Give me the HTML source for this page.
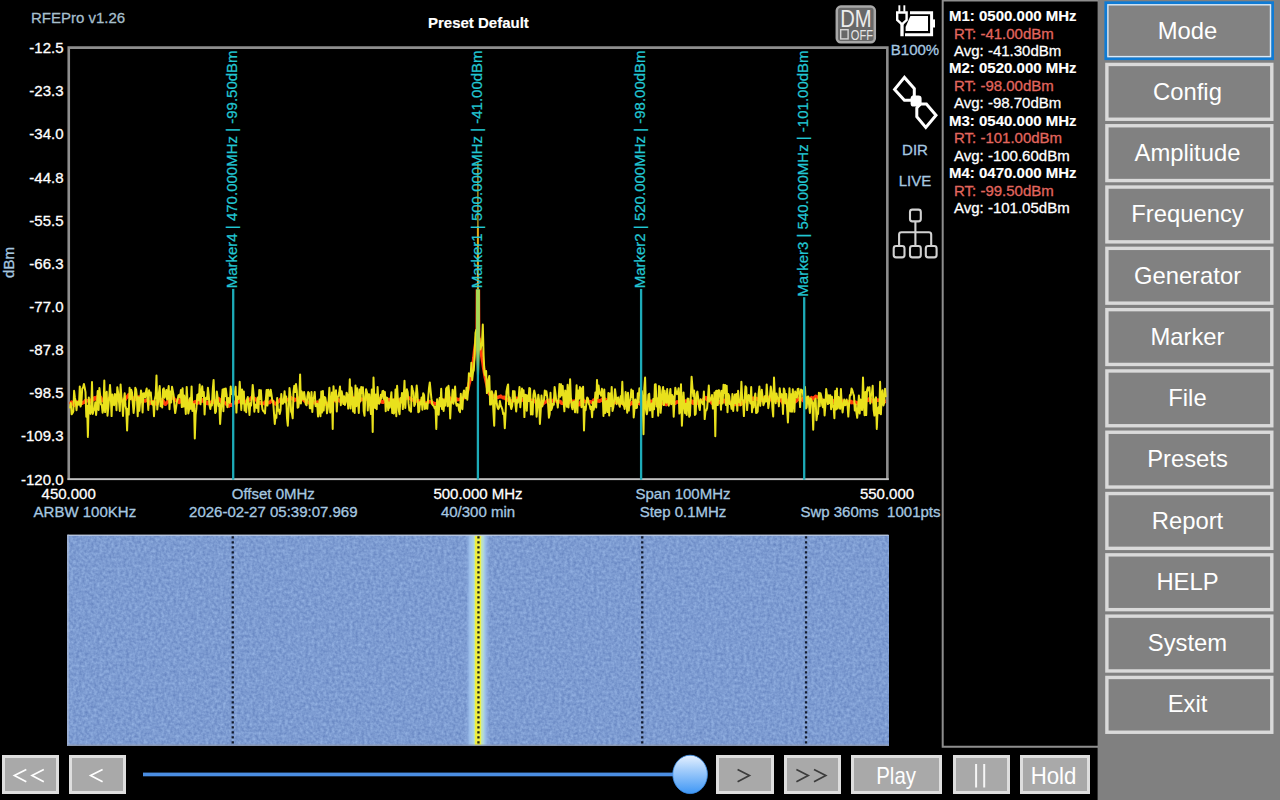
<!DOCTYPE html>
<html>
<head>
<meta charset="utf-8">
<title>RFEPro</title>
<style>
html,body{margin:0;padding:0;background:#000;}
body{width:1280px;height:800px;position:relative;overflow:hidden;font-family:"Liberation Sans",sans-serif;}
.t{position:absolute;font-size:15px;line-height:17px;white-space:nowrap;color:#a6c8e0;-webkit-text-stroke:0.3px;}
.t.b{-webkit-text-stroke:0.15px;}
.w{color:#fff;}
.b{font-weight:bold;}
.c{text-align:center;}
svg{position:absolute;left:0;top:0;}
svg text{font-family:"Liberation Sans",sans-serif;}
#side{position:absolute;left:1097.5px;top:0;width:182.5px;height:800px;}
.mt{position:absolute;left:5.4px;width:169.2px;height:50px;color:#fff;font-size:23.8px;text-align:center;line-height:50px;white-space:nowrap;}
.bb{position:absolute;top:755.2px;height:32.6px;border:3px solid #dedede;background:#a9a9a9;color:#fff;font-size:22px;text-align:center;line-height:32px;}
</style>
</head>
<body>

<!-- main chart -->
<svg width="1280" height="800" viewBox="0 0 1280 800">
  <defs>
    <filter id="nz" x="0" y="0" width="100%" height="100%" color-interpolation-filters="sRGB">
      <feTurbulence type="fractalNoise" baseFrequency="0.34" numOctaves="2" seed="3" result="n"/>
      <feColorMatrix in="n" type="matrix" values="0.23 0 0 0 0.375  0.23 0 0 0 0.495  0.17 0 0 0 0.737  0 0 0 0 1"/>
    </filter>
    <linearGradient id="knob" x1="0" y1="0" x2="0" y2="1">
      <stop offset="0" stop-color="#e6f1ff"/>
      <stop offset="0.35" stop-color="#a9d0fb"/>
      <stop offset="1" stop-color="#3f97f5"/>
    </linearGradient>
    <linearGradient id="spk" gradientUnits="userSpaceOnUse" x1="0" y1="289" x2="0" y2="376">
      <stop offset="0" stop-color="#a8d955"/>
      <stop offset="0.7" stop-color="#a2d65c"/>
      <stop offset="1" stop-color="#7ccb80" stop-opacity="0"/>
    </linearGradient>
    <linearGradient id="hot" x1="0" y1="0" x2="1" y2="0">
      <stop offset="0" stop-color="#8fb0e2" stop-opacity="0"/>
      <stop offset="0.15" stop-color="#9cbeea"/>
      <stop offset="0.30" stop-color="#a8ceea"/>
      <stop offset="0.355" stop-color="#bce2bc"/>
      <stop offset="0.385" stop-color="#eeee40"/>
      <stop offset="0.60" stop-color="#f3f13a"/>
      <stop offset="0.635" stop-color="#c4e6b0"/>
      <stop offset="0.73" stop-color="#aed6da"/>
      <stop offset="0.80" stop-color="#9cbeea"/>
      <stop offset="1" stop-color="#8fb0e2" stop-opacity="0"/>
    </linearGradient>
  </defs>

  <!-- waterfall -->
  <rect x="67.9" y="535" width="820.6" height="210.6" fill="#7d9bd2"/>
  <rect x="67.9" y="535" width="820.6" height="210.6" filter="url(#nz)"/>
  <rect x="466" y="535" width="24" height="210.6" fill="url(#hot)"/>
  <rect x="67.5" y="534.6" width="821" height="1.2" fill="#c3cfe4"/>
  <rect x="67.4" y="534.6" width="1.1" height="211" fill="#aebbd4"/>
  <rect x="67.5" y="744.6" width="821" height="1.2" fill="#8a94aa"/>
  <line x1="232.75" y1="536.2" x2="232.75" y2="745" stroke="#0a0f1e" stroke-width="2.3" stroke-opacity="0.92" stroke-dasharray="2.4 2.6"/>
<line x1="478.45" y1="536.2" x2="478.45" y2="745" stroke="#0a0f1e" stroke-width="2.3" stroke-opacity="0.92" stroke-dasharray="2.4 2.6"/>
<line x1="642.25" y1="536.2" x2="642.25" y2="745" stroke="#0a0f1e" stroke-width="2.3" stroke-opacity="0.92" stroke-dasharray="2.4 2.6"/>
<line x1="806.05" y1="536.2" x2="806.05" y2="745" stroke="#0a0f1e" stroke-width="2.3" stroke-opacity="0.92" stroke-dasharray="2.4 2.6"/>


  <!-- plot frame -->
  <path d="M68.75 480 V47.6 H887.35 V480" fill="none" stroke="#8e8e8e" stroke-width="2.6"/>
  <rect x="67.5" y="478.2" width="821.3" height="1.9" fill="#c2c2c2"/>
  <!-- traces -->
  <polyline points="70.0,401.9 70.8,402.8 71.6,402.0 72.4,403.9 73.3,403.7 74.1,405.4 74.9,404.0 75.7,403.5 76.5,402.0 77.3,402.4 78.2,401.9 79.0,402.0 79.8,402.5 80.6,402.2 81.4,403.2 82.2,403.3 83.1,402.4 83.9,402.2 84.7,402.4 85.5,400.4 86.3,400.3 87.1,400.9 87.9,400.8 88.8,401.2 89.6,401.5 90.4,401.8 91.2,399.9 92.0,400.0 92.8,399.9 93.7,399.4 94.5,397.8 95.3,398.3 96.1,399.1 96.9,397.1 97.7,398.7 98.6,399.3 99.4,398.8 100.2,397.0 101.0,398.2 101.8,400.6 102.6,400.1 103.4,400.6 104.3,401.0 105.1,400.6 105.9,400.4 106.7,400.2 107.5,400.6 108.3,399.5 109.2,398.3 110.0,398.5 110.8,399.2 111.6,398.7 112.4,398.5 113.2,399.6 114.1,400.2 114.9,399.3 115.7,399.5 116.5,400.0 117.3,399.9 118.1,400.0 118.9,400.1 119.8,401.8 120.6,400.2 121.4,400.1 122.2,400.9 123.0,400.1 123.8,399.9 124.7,400.0 125.5,399.1 126.3,397.3 127.1,397.2 127.9,396.1 128.7,394.7 129.6,396.2 130.4,397.1 131.2,396.8 132.0,398.7 132.8,399.2 133.6,398.2 134.4,397.6 135.3,397.4 136.1,399.4 136.9,397.5 137.7,397.3 138.5,397.0 139.3,396.9 140.2,398.8 141.0,400.3 141.8,401.4 142.6,399.7 143.4,400.5 144.2,400.8 145.1,401.0 145.9,400.5 146.7,400.1 147.5,399.9 148.3,401.1 149.1,403.9 149.9,403.4 150.8,402.9 151.6,401.6 152.4,401.6 153.2,402.1 154.0,401.6 154.8,402.9 155.7,403.6 156.5,404.2 157.3,403.6 158.1,401.5 158.9,400.8 159.7,399.8 160.6,399.7 161.4,399.5 162.2,400.1 163.0,400.4 163.8,402.6 164.6,403.5 165.4,404.3 166.3,403.2 167.1,402.4 167.9,401.3 168.7,399.8 169.5,400.2 170.3,399.3 171.2,397.8 172.0,398.1 172.8,397.4 173.6,397.9 174.4,399.6 175.2,399.6 176.1,400.5 176.9,400.4 177.7,400.9 178.5,400.6 179.3,402.5 180.1,400.5 180.9,399.3 181.8,399.8 182.6,400.7 183.4,400.7 184.2,400.1 185.0,399.8 185.8,399.6 186.7,401.4 187.5,402.4 188.3,401.0 189.1,400.8 189.9,402.1 190.7,402.8 191.6,403.9 192.4,404.4 193.2,403.0 194.0,403.0 194.8,401.8 195.6,401.5 196.4,402.8 197.3,403.2 198.1,400.9 198.9,401.6 199.7,402.5 200.5,401.2 201.3,401.1 202.2,401.1 203.0,399.7 203.8,401.4 204.6,401.0 205.4,401.9 206.2,403.1 207.1,403.6 207.9,402.3 208.7,402.2 209.5,403.7 210.3,404.5 211.1,402.7 211.9,401.6 212.8,402.5 213.6,400.2 214.4,400.6 215.2,401.7 216.0,401.7 216.8,400.8 217.7,399.3 218.5,398.6 219.3,399.2 220.1,399.8 220.9,401.3 221.7,401.3 222.6,401.8 223.4,401.5 224.2,402.5 225.0,402.8 225.8,403.4 226.6,404.2 227.4,405.0 228.3,405.5 229.1,406.1 229.9,405.0 230.7,404.5 231.5,405.3 232.3,404.4 233.2,403.8 234.0,402.2 234.8,402.2 235.6,402.3 236.4,402.8 237.2,402.5 238.1,401.9 238.9,401.6 239.7,401.7 240.5,401.1 241.3,401.0 242.1,400.8 242.9,401.6 243.8,401.4 244.6,402.2 245.4,402.8 246.2,402.5 247.0,400.4 247.8,399.6 248.7,399.7 249.5,400.0 250.3,399.2 251.1,398.1 251.9,397.3 252.7,397.8 253.6,397.9 254.4,398.5 255.2,399.0 256.0,400.0 256.8,400.3 257.6,402.3 258.4,403.2 259.3,402.6 260.1,403.2 260.9,402.5 261.7,403.5 262.5,403.6 263.3,402.9 264.2,403.7 265.0,404.0 265.8,401.5 266.6,402.0 267.4,402.5 268.2,402.9 269.1,402.7 269.9,402.5 270.7,401.4 271.5,400.7 272.3,401.1 273.1,401.4 273.9,402.6 274.8,403.7 275.6,404.1 276.4,403.1 277.2,402.8 278.0,401.9 278.8,400.9 279.7,401.1 280.5,399.2 281.3,399.8 282.1,400.5 282.9,400.9 283.7,399.9 284.6,400.1 285.4,400.8 286.2,400.4 287.0,399.5 287.8,399.7 288.6,400.0 289.5,399.1 290.3,398.4 291.1,397.8 291.9,398.8 292.7,398.8 293.5,398.6 294.3,400.5 295.2,399.4 296.0,399.5 296.8,399.9 297.6,398.0 298.4,398.1 299.2,399.0 300.1,399.3 300.9,398.9 301.7,398.4 302.5,398.7 303.3,399.7 304.1,400.4 305.0,401.2 305.8,402.1 306.6,402.0 307.4,402.3 308.2,402.1 309.0,402.7 309.8,403.3 310.7,403.2 311.5,403.3 312.3,402.0 313.1,402.7 313.9,402.4 314.7,402.2 315.6,403.3 316.4,402.4 317.2,402.1 318.0,403.8 318.8,403.0 319.6,401.9 320.5,402.5 321.3,400.8 322.1,400.7 322.9,401.8 323.7,401.2 324.5,401.4 325.3,402.6 326.2,404.3 327.0,403.8 327.8,404.1 328.6,403.2 329.4,402.6 330.2,402.9 331.1,403.2 331.9,401.4 332.7,399.8 333.5,399.2 334.3,399.7 335.1,400.7 336.0,401.1 336.8,399.5 337.6,399.3 338.4,399.7 339.2,400.9 340.0,400.7 340.8,401.5 341.7,401.5 342.5,400.7 343.3,399.8 344.1,399.8 344.9,400.2 345.7,400.0 346.6,398.5 347.4,398.4 348.2,399.9 349.0,398.6 349.8,398.6 350.6,395.7 351.5,396.6 352.3,397.1 353.1,397.8 353.9,397.7 354.7,398.6 355.5,400.1 356.3,401.9 357.2,401.9 358.0,402.3 358.8,402.6 359.6,400.6 360.4,399.9 361.2,399.0 362.1,399.6 362.9,399.5 363.7,399.8 364.5,400.1 365.3,399.5 366.1,399.1 367.0,399.0 367.8,399.0 368.6,400.5 369.4,401.2 370.2,400.8 371.0,401.2 371.8,401.8 372.7,401.4 373.5,402.2 374.3,402.6 375.1,401.7 375.9,401.9 376.7,400.5 377.6,400.1 378.4,399.4 379.2,398.6 380.0,400.7 380.8,400.8 381.6,402.0 382.5,402.3 383.3,402.2 384.1,401.0 384.9,401.0 385.7,399.5 386.5,400.1 387.3,400.2 388.2,400.2 389.0,399.4 389.8,399.6 390.6,400.3 391.4,400.6 392.2,401.9 393.1,400.7 393.9,400.0 394.7,399.7 395.5,399.6 396.3,400.3 397.1,400.7 398.0,400.0 398.8,400.8 399.6,401.5 400.4,400.0 401.2,398.7 402.0,398.6 402.8,398.4 403.7,398.5 404.5,397.4 405.3,398.2 406.1,398.4 406.9,398.2 407.7,397.2 408.6,397.8 409.4,397.9 410.2,398.6 411.0,399.4 411.8,400.1 412.6,400.1 413.5,399.4 414.3,400.2 415.1,400.8 415.9,401.1 416.7,400.8 417.5,400.2 418.3,401.3 419.2,401.0 420.0,401.8 420.8,401.1 421.6,401.9 422.4,402.8 423.2,403.2 424.1,403.0 424.9,403.7 425.7,403.2 426.5,402.9 427.3,402.6 428.1,402.2 429.0,401.3 429.8,401.9 430.6,401.8 431.4,401.7 432.2,403.4 433.0,402.8 433.8,403.3 434.7,403.7 435.5,403.8 436.3,403.4 437.1,402.9 437.9,402.2 438.7,402.7 439.6,401.9 440.4,401.4 441.2,401.7 442.0,401.6 442.8,400.9 443.6,400.5 444.5,399.9 445.3,399.9 446.1,399.0 446.9,397.2 447.7,397.2 448.5,398.9 449.3,397.6 450.2,398.4 451.0,399.9 451.8,402.1 452.6,401.6 453.4,400.5 454.2,399.6 455.1,400.1 455.9,398.8 456.7,399.0 457.5,399.7 458.3,399.6 459.1,399.4 460.0,399.3 460.8,398.8 461.6,400.5 462.4,398.5 463.2,398.4 464.0,397.0 464.8,396.6 465.7,394.9 466.5,393.1 467.3,392.0 468.1,388.6 468.9,384.5 469.7,381.5 470.6,378.8 471.4,374.3 472.2,369.6 473.0,363.9 473.8,358.1 474.6,350.7 475.5,344.3 476.3,338.7 477.1,332.6 477.9,166.7 478.7,335.6 479.5,341.9 480.3,347.4 481.2,352.5 482.0,357.7 482.8,362.1 483.6,367.8 484.4,372.5 485.2,377.2 486.1,381.4 486.9,384.9 487.7,388.6 488.5,391.2 489.3,393.6 490.1,394.6 491.0,396.3 491.8,397.2 492.6,395.8 493.4,396.2 494.2,396.5 495.0,396.2 495.8,397.7 496.7,397.5 497.5,397.3 498.3,397.3 499.1,396.9 499.9,396.6 500.7,396.0 501.6,397.1 502.4,397.1 503.2,397.9 504.0,397.1 504.8,397.4 505.6,398.9 506.5,399.0 507.3,400.0 508.1,399.3 508.9,399.7 509.7,401.8 510.5,402.0 511.3,401.0 512.2,400.7 513.0,401.3 513.8,400.6 514.6,400.2 515.4,398.9 516.2,398.3 517.1,398.3 517.9,399.2 518.7,399.1 519.5,399.0 520.3,399.2 521.1,399.0 522.0,400.2 522.8,399.8 523.6,399.9 524.4,399.7 525.2,399.9 526.0,400.2 526.8,400.1 527.7,399.5 528.5,399.9 529.3,399.7 530.1,400.5 530.9,400.1 531.7,400.2 532.6,401.4 533.4,400.3 534.2,401.1 535.0,401.0 535.8,402.2 536.6,403.5 537.5,402.7 538.3,403.7 539.1,405.3 539.9,405.0 540.7,405.9 541.5,405.6 542.3,403.5 543.2,403.6 544.0,403.0 544.8,402.3 545.6,401.9 546.4,401.9 547.2,400.5 548.1,400.6 548.9,400.3 549.7,400.3 550.5,401.5 551.3,401.1 552.1,401.0 553.0,400.5 553.8,399.9 554.6,398.6 555.4,400.5 556.2,401.0 557.0,401.4 557.8,402.1 558.7,401.6 559.5,401.6 560.3,401.4 561.1,402.8 561.9,403.4 562.7,403.2 563.6,403.4 564.4,403.6 565.2,403.5 566.0,403.4 566.8,404.1 567.6,402.3 568.5,402.8 569.3,402.0 570.1,401.4 570.9,400.5 571.7,401.0 572.5,401.9 573.3,401.4 574.2,401.1 575.0,403.1 575.8,405.2 576.6,405.2 577.4,405.1 578.2,404.9 579.1,404.1 579.9,404.7 580.7,402.0 581.5,401.1 582.3,399.9 583.1,399.8 584.0,401.7 584.8,401.4 585.6,401.8 586.4,401.3 587.2,401.4 588.0,400.8 588.8,401.5 589.7,401.8 590.5,401.7 591.3,402.2 592.1,402.5 592.9,401.8 593.7,400.0 594.6,400.3 595.4,399.6 596.2,400.7 597.0,401.1 597.8,400.8 598.6,400.3 599.5,401.3 600.3,400.7 601.1,400.6 601.9,399.5 602.7,398.8 603.5,398.5 604.3,399.1 605.2,399.1 606.0,400.0 606.8,400.8 607.6,402.4 608.4,403.4 609.2,404.2 610.1,404.0 610.9,403.6 611.7,404.5 612.5,404.2 613.3,403.5 614.1,402.4 615.0,402.4 615.8,402.0 616.6,402.2 617.4,401.3 618.2,402.6 619.0,402.2 619.8,404.1 620.7,402.3 621.5,401.3 622.3,403.1 623.1,403.4 623.9,404.3 624.7,405.5 625.6,405.4 626.4,405.7 627.2,404.3 628.0,404.4 628.8,405.0 629.6,404.7 630.5,404.0 631.3,403.0 632.1,402.3 632.9,403.5 633.7,403.9 634.5,403.8 635.3,404.2 636.2,403.2 637.0,403.3 637.8,403.1 638.6,403.2 639.4,403.0 640.2,404.1 641.1,401.9 641.9,402.3 642.7,402.8 643.5,404.2 644.3,403.9 645.1,404.8 646.0,404.1 646.8,402.8 647.6,402.1 648.4,402.4 649.2,401.1 650.0,401.3 650.8,401.3 651.7,401.2 652.5,401.6 653.3,401.1 654.1,402.2 654.9,403.6 655.7,402.3 656.6,402.8 657.4,402.9 658.2,402.4 659.0,402.7 659.8,403.6 660.6,403.5 661.5,404.0 662.3,403.3 663.1,403.4 663.9,403.4 664.7,402.5 665.5,403.7 666.3,404.7 667.2,403.7 668.0,402.3 668.8,402.1 669.6,402.6 670.4,401.4 671.2,400.9 672.1,400.0 672.9,401.7 673.7,401.7 674.5,402.5 675.3,403.3 676.1,402.6 677.0,401.8 677.8,402.1 678.6,402.2 679.4,400.9 680.2,400.3 681.0,400.5 681.9,400.1 682.7,400.1 683.5,401.3 684.3,401.7 685.1,401.4 685.9,400.8 686.7,401.9 687.6,402.5 688.4,402.8 689.2,403.9 690.0,402.7 690.8,402.1 691.6,400.9 692.5,402.8 693.3,403.3 694.1,401.5 694.9,402.7 695.7,404.1 696.5,403.6 697.4,401.9 698.2,401.3 699.0,402.1 699.8,401.5 700.6,401.1 701.4,400.9 702.2,400.5 703.1,399.9 703.9,399.0 704.7,398.0 705.5,397.4 706.3,397.8 707.1,399.8 708.0,399.4 708.8,400.9 709.6,398.9 710.4,400.1 711.2,401.8 712.0,403.3 712.9,402.7 713.7,402.3 714.5,401.6 715.3,401.3 716.1,401.9 716.9,401.1 717.7,401.7 718.6,402.9 719.4,402.0 720.2,401.4 721.0,402.2 721.8,402.3 722.6,401.2 723.5,400.4 724.3,401.4 725.1,400.4 725.9,402.7 726.7,402.4 727.5,402.0 728.4,402.0 729.2,401.8 730.0,403.1 730.8,403.0 731.6,402.3 732.4,403.0 733.2,402.7 734.1,402.7 734.9,404.4 735.7,404.6 736.5,403.7 737.3,404.8 738.1,404.4 739.0,403.8 739.8,404.6 740.6,404.4 741.4,403.3 742.2,402.5 743.0,403.2 743.9,402.1 744.7,401.6 745.5,401.5 746.3,400.1 747.1,399.6 747.9,399.4 748.7,398.7 749.6,398.3 750.4,397.5 751.2,397.9 752.0,399.8 752.8,398.5 753.6,398.1 754.5,397.9 755.3,398.2 756.1,398.5 756.9,398.7 757.7,399.7 758.5,399.2 759.4,399.3 760.2,400.2 761.0,400.1 761.8,400.4 762.6,400.5 763.4,400.1 764.2,397.8 765.1,399.1 765.9,398.9 766.7,398.5 767.5,398.3 768.3,397.3 769.1,398.0 770.0,398.6 770.8,398.8 771.6,400.2 772.4,399.3 773.2,400.6 774.0,400.1 774.9,399.2 775.7,400.1 776.5,400.3 777.3,400.5 778.1,399.1 778.9,399.0 779.7,400.7 780.6,399.8 781.4,399.0 782.2,400.9 783.0,403.3 783.8,400.8 784.6,400.7 785.5,402.6 786.3,401.5 787.1,400.2 787.9,402.3 788.7,401.1 789.5,400.4 790.4,400.5 791.2,401.2 792.0,400.8 792.8,401.5 793.6,401.3 794.4,401.5 795.2,401.8 796.1,401.2 796.9,400.3 797.7,399.6 798.5,399.4 799.3,398.0 800.1,399.4 801.0,399.5 801.8,399.5 802.6,398.6 803.4,400.8 804.2,401.2 805.0,401.4 805.9,401.2 806.7,399.2 807.5,399.1 808.3,399.4 809.1,399.2 809.9,398.5 810.7,398.9 811.6,397.6 812.4,399.0 813.2,398.1 814.0,397.7 814.8,397.2 815.6,396.2 816.5,396.9 817.3,396.9 818.1,397.1 818.9,398.0 819.7,398.9 820.5,399.8 821.4,399.2 822.2,401.3 823.0,402.4 823.8,402.2 824.6,400.9 825.4,401.0 826.2,399.9 827.1,400.0 827.9,400.6 828.7,402.0 829.5,401.7 830.3,400.1 831.1,400.1 832.0,401.1 832.8,400.5 833.6,401.8 834.4,402.7 835.2,401.5 836.0,401.1 836.9,400.2 837.7,400.1 838.5,400.3 839.3,400.2 840.1,400.5 840.9,399.6 841.7,400.9 842.6,402.5 843.4,403.1 844.2,402.1 845.0,402.4 845.8,404.3 846.6,401.5 847.5,402.2 848.3,402.2 849.1,401.6 849.9,401.2 850.7,401.3 851.5,402.6 852.4,402.0 853.2,402.7 854.0,402.7 854.8,401.9 855.6,402.1 856.4,403.5 857.2,403.8 858.1,403.0 858.9,402.1 859.7,403.1 860.5,402.9 861.3,402.4 862.1,401.3 863.0,400.9 863.8,400.8 864.6,401.0 865.4,400.6 866.2,400.0 867.0,400.2 867.9,400.5 868.7,399.0 869.5,399.2 870.3,400.1 871.1,399.6 871.9,400.8 872.7,401.7 873.6,400.8 874.4,400.8 875.2,400.1 876.0,399.5 876.8,400.3 877.6,399.9 878.5,400.4 879.3,400.2 880.1,400.1 880.9,400.2 881.7,401.4 882.5,401.1 883.4,401.0 884.2,400.6 885.0,401.5 885.8,401.3" fill="none" stroke="#ff3d0c" stroke-width="3.4" stroke-linejoin="round"/>
<polyline points="70.0,408.4 70.8,403.1 71.6,414.3 72.4,413.3 73.3,411.6 74.1,390.8 74.9,397.7 75.7,401.3 76.5,410.2 77.3,402.1 78.2,402.6 79.0,404.8 79.8,386.4 80.6,406.6 81.4,403.0 82.2,388.7 83.1,387.4 83.9,384.0 84.7,387.7 85.5,392.1 86.3,416.8 87.1,406.1 87.9,436.9 88.8,397.4 89.6,410.4 90.4,413.9 91.2,410.5 92.0,382.0 92.8,413.9 93.7,409.5 94.5,409.8 95.3,402.3 96.1,415.0 96.9,405.9 97.7,391.1 98.6,410.0 99.4,388.1 100.2,395.9 101.0,404.5 101.8,405.1 102.6,412.7 103.4,408.7 104.3,380.5 105.1,412.1 105.9,397.0 106.7,391.8 107.5,415.7 108.3,407.6 109.2,397.1 110.0,384.9 110.8,396.7 111.6,416.1 112.4,394.5 113.2,401.7 114.1,405.3 114.9,394.0 115.7,395.4 116.5,410.2 117.3,387.2 118.1,392.4 118.9,400.1 119.8,411.0 120.6,384.5 121.4,397.2 122.2,402.2 123.0,415.9 123.8,401.1 124.7,393.3 125.5,405.9 126.3,409.7 127.1,430.5 127.9,408.7 128.7,414.6 129.6,387.7 130.4,399.2 131.2,389.7 132.0,392.6 132.8,403.2 133.6,412.9 134.4,404.5 135.3,387.8 136.1,389.7 136.9,397.0 137.7,416.3 138.5,397.2 139.3,410.8 140.2,400.9 141.0,390.6 141.8,394.6 142.6,412.5 143.4,393.7 144.2,393.2 145.1,397.5 145.9,391.8 146.7,388.5 147.5,398.8 148.3,409.9 149.1,390.3 149.9,395.3 150.8,392.5 151.6,403.2 152.4,404.6 153.2,401.7 154.0,416.3 154.8,399.2 155.7,395.1 156.5,375.4 157.3,409.4 158.1,401.4 158.9,393.1 159.7,386.0 160.6,406.2 161.4,402.3 162.2,407.4 163.0,389.3 163.8,388.3 164.6,397.8 165.4,394.6 166.3,390.0 167.1,399.5 167.9,392.2 168.7,386.1 169.5,409.3 170.3,391.5 171.2,402.5 172.0,386.8 172.8,391.0 173.6,395.2 174.4,406.3 175.2,413.1 176.1,407.3 176.9,401.5 177.7,399.2 178.5,395.3 179.3,394.9 180.1,397.5 180.9,390.1 181.8,407.1 182.6,388.2 183.4,406.6 184.2,395.6 185.0,401.6 185.8,414.0 186.7,386.9 187.5,400.7 188.3,413.5 189.1,409.2 189.9,398.2 190.7,408.8 191.6,386.4 192.4,411.0 193.2,407.1 194.0,404.0 194.8,438.5 195.6,414.9 196.4,408.7 197.3,394.8 198.1,394.4 198.9,400.3 199.7,384.6 200.5,404.3 201.3,394.2 202.2,386.2 203.0,396.1 203.8,392.1 204.6,414.4 205.4,398.4 206.2,397.6 207.1,399.4 207.9,387.7 208.7,394.5 209.5,405.4 210.3,409.0 211.1,404.2 211.9,405.5 212.8,389.2 213.6,379.9 214.4,402.0 215.2,413.0 216.0,411.5 216.8,391.5 217.7,397.8 218.5,405.9 219.3,403.5 220.1,424.0 220.9,411.0 221.7,400.6 222.6,389.4 223.4,411.2 224.2,388.7 225.0,396.2 225.8,388.6 226.6,395.0 227.4,407.2 228.3,398.1 229.1,400.2 229.9,402.9 230.7,386.4 231.5,394.0 232.3,391.3 233.2,396.4 234.0,394.1 234.8,392.8 235.6,386.8 236.4,412.6 237.2,396.6 238.1,398.7 238.9,399.0 239.7,381.8 240.5,393.5 241.3,409.9 242.1,389.6 242.9,403.5 243.8,391.4 244.6,410.6 245.4,404.6 246.2,412.2 247.0,399.9 247.8,397.0 248.7,404.9 249.5,414.9 250.3,403.2 251.1,405.6 251.9,397.5 252.7,384.9 253.6,394.4 254.4,411.7 255.2,404.6 256.0,406.8 256.8,407.9 257.6,397.4 258.4,411.9 259.3,389.9 260.1,399.1 260.9,390.2 261.7,403.8 262.5,409.4 263.3,411.1 264.2,411.7 265.0,413.4 265.8,400.1 266.6,390.0 267.4,405.6 268.2,389.8 269.1,394.1 269.9,395.9 270.7,389.7 271.5,394.7 272.3,400.6 273.1,401.1 273.9,411.9 274.8,424.0 275.6,415.3 276.4,417.9 277.2,397.9 278.0,410.8 278.8,409.6 279.7,414.0 280.5,410.6 281.3,394.1 282.1,403.4 282.9,403.7 283.7,401.4 284.6,391.2 285.4,402.5 286.2,396.6 287.0,418.2 287.8,425.7 288.6,409.8 289.5,388.1 290.3,394.8 291.1,411.5 291.9,413.4 292.7,418.3 293.5,392.0 294.3,385.7 295.2,392.1 296.0,384.0 296.8,390.5 297.6,407.8 298.4,407.0 299.2,401.0 300.1,374.4 300.9,403.4 301.7,391.5 302.5,395.2 303.3,399.5 304.1,392.1 305.0,398.3 305.8,404.4 306.6,405.3 307.4,396.1 308.2,392.0 309.0,393.1 309.8,408.2 310.7,408.2 311.5,392.1 312.3,411.9 313.1,398.1 313.9,397.9 314.7,391.9 315.6,406.1 316.4,406.4 317.2,403.8 318.0,416.5 318.8,410.4 319.6,399.5 320.5,416.2 321.3,391.6 322.1,412.4 322.9,391.0 323.7,410.4 324.5,396.9 325.3,397.7 326.2,403.7 327.0,413.3 327.8,408.9 328.6,401.2 329.4,387.8 330.2,412.5 331.1,405.6 331.9,392.5 332.7,428.9 333.5,386.3 334.3,397.8 335.1,400.6 336.0,390.2 336.8,411.4 337.6,397.4 338.4,396.0 339.2,392.8 340.0,386.5 340.8,405.2 341.7,391.3 342.5,396.1 343.3,403.9 344.1,396.3 344.9,405.0 345.7,402.1 346.6,392.7 347.4,394.9 348.2,408.6 349.0,401.7 349.8,379.2 350.6,408.4 351.5,387.6 352.3,394.2 353.1,411.4 353.9,398.0 354.7,412.9 355.5,385.6 356.3,406.2 357.2,388.2 358.0,401.1 358.8,413.0 359.6,389.6 360.4,401.2 361.2,387.0 362.1,393.0 362.9,387.3 363.7,411.1 364.5,415.7 365.3,396.7 366.1,389.2 367.0,392.4 367.8,410.4 368.6,394.2 369.4,394.5 370.2,407.9 371.0,414.0 371.8,389.5 372.7,432.0 373.5,377.6 374.3,398.7 375.1,408.0 375.9,394.6 376.7,409.3 377.6,387.1 378.4,402.2 379.2,403.8 380.0,401.0 380.8,394.8 381.6,398.5 382.5,391.2 383.3,390.8 384.1,399.5 384.9,392.0 385.7,411.3 386.5,397.4 387.3,398.1 388.2,410.2 389.0,402.5 389.8,407.7 390.6,400.0 391.4,392.3 392.2,413.0 393.1,399.6 393.9,413.6 394.7,410.8 395.5,389.6 396.3,416.3 397.1,385.7 398.0,400.8 398.8,410.5 399.6,414.3 400.4,398.3 401.2,402.6 402.0,392.9 402.8,409.1 403.7,398.6 404.5,380.8 405.3,407.9 406.1,394.2 406.9,389.3 407.7,392.3 408.6,403.9 409.4,410.5 410.2,409.5 411.0,411.8 411.8,386.0 412.6,389.5 413.5,392.7 414.3,405.9 415.1,404.0 415.9,395.0 416.7,385.5 417.5,394.2 418.3,412.3 419.2,411.5 420.0,402.1 420.8,404.1 421.6,397.4 422.4,409.7 423.2,393.3 424.1,395.2 424.9,408.9 425.7,408.1 426.5,403.5 427.3,408.8 428.1,398.9 429.0,388.2 429.8,382.4 430.6,390.7 431.4,398.7 432.2,403.9 433.0,405.5 433.8,406.0 434.7,408.5 435.5,406.6 436.3,428.9 437.1,399.2 437.9,405.7 438.7,414.7 439.6,398.0 440.4,406.2 441.2,388.8 442.0,409.0 442.8,399.2 443.6,411.0 444.5,400.3 445.3,405.6 446.1,388.7 446.9,387.4 447.7,406.3 448.5,385.8 449.3,394.2 450.2,418.5 451.0,402.0 451.8,402.1 452.6,389.7 453.4,403.7 454.2,396.8 455.1,386.5 455.9,402.6 456.7,405.7 457.5,404.1 458.3,404.5 459.1,410.6 460.0,412.1 460.8,393.7 461.6,406.5 462.4,409.3 463.2,394.6 464.0,390.4 464.8,396.5 465.7,398.2 466.5,387.7 467.3,399.7 468.1,390.6 468.9,373.2 469.7,374.4 470.6,376.1 471.4,362.8 472.2,380.1 473.0,372.3 473.8,370.2 474.6,355.4 475.5,333.0 476.3,329.8 477.1,335.0 477.9,162.5 478.7,342.6 479.5,338.6 480.3,349.6 481.2,346.2 482.0,342.5 482.8,324.5 483.6,355.2 484.4,372.2 485.2,375.5 486.1,370.9 486.9,393.1 487.7,391.5 488.5,380.0 489.3,376.0 490.1,404.6 491.0,404.5 491.8,391.3 492.6,394.2 493.4,411.5 494.2,425.7 495.0,395.3 495.8,391.0 496.7,403.3 497.5,407.4 498.3,409.1 499.1,407.5 499.9,401.1 500.7,405.5 501.6,407.2 502.4,409.6 503.2,414.1 504.0,413.3 504.8,428.2 505.6,413.0 506.5,391.4 507.3,387.1 508.1,384.4 508.9,404.2 509.7,397.5 510.5,405.2 511.3,409.0 512.2,405.8 513.0,391.1 513.8,400.9 514.6,391.2 515.4,403.9 516.2,411.5 517.1,399.6 517.9,402.7 518.7,396.8 519.5,387.1 520.3,407.3 521.1,398.6 522.0,388.6 522.8,396.5 523.6,390.3 524.4,417.1 525.2,394.8 526.0,394.9 526.8,410.8 527.7,395.5 528.5,401.1 529.3,388.0 530.1,388.6 530.9,414.4 531.7,402.1 532.6,414.4 533.4,395.2 534.2,390.6 535.0,394.0 535.8,399.2 536.6,416.7 537.5,405.5 538.3,394.7 539.1,400.7 539.9,424.0 540.7,411.4 541.5,395.6 542.3,406.4 543.2,401.8 544.0,400.0 544.8,390.5 545.6,395.1 546.4,391.3 547.2,397.0 548.1,404.5 548.9,417.7 549.7,414.0 550.5,392.7 551.3,409.9 552.1,407.6 553.0,403.4 553.8,404.6 554.6,387.0 555.4,393.0 556.2,400.2 557.0,401.2 557.8,407.5 558.7,397.4 559.5,384.1 560.3,396.7 561.1,384.3 561.9,395.2 562.7,385.9 563.6,401.6 564.4,411.3 565.2,390.4 566.0,392.4 566.8,406.8 567.6,384.8 568.5,407.5 569.3,396.3 570.1,379.2 570.9,398.2 571.7,406.3 572.5,409.3 573.3,402.0 574.2,401.5 575.0,412.3 575.8,403.5 576.6,385.2 577.4,412.6 578.2,390.5 579.1,398.8 579.9,387.0 580.7,388.0 581.5,407.3 582.3,390.2 583.1,386.7 584.0,430.5 584.8,407.0 585.6,410.2 586.4,403.0 587.2,397.4 588.0,398.6 588.8,403.8 589.7,405.3 590.5,409.0 591.3,407.0 592.1,417.2 592.9,402.1 593.7,409.8 594.6,403.5 595.4,392.4 596.2,407.4 597.0,379.9 597.8,397.9 598.6,385.5 599.5,393.8 600.3,392.4 601.1,395.7 601.9,388.8 602.7,394.0 603.5,415.9 604.3,389.6 605.2,413.0 606.0,407.6 606.8,401.1 607.6,412.1 608.4,392.9 609.2,415.4 610.1,393.5 610.9,405.9 611.7,386.9 612.5,410.9 613.3,407.6 614.1,401.1 615.0,389.2 615.8,395.7 616.6,404.2 617.4,398.2 618.2,397.4 619.0,403.8 619.8,406.8 620.7,396.2 621.5,403.4 622.3,381.8 623.1,404.7 623.9,405.1 624.7,409.0 625.6,392.1 626.4,398.4 627.2,412.8 628.0,392.8 628.8,410.6 629.6,401.1 630.5,399.5 631.3,389.5 632.1,397.0 632.9,390.8 633.7,417.4 634.5,408.9 635.3,399.4 636.2,408.0 637.0,407.8 637.8,393.3 638.6,402.2 639.4,388.3 640.2,390.3 641.1,390.4 641.9,391.2 642.7,403.2 643.5,434.3 644.3,388.6 645.1,377.6 646.0,409.9 646.8,414.2 647.6,410.2 648.4,394.9 649.2,393.7 650.0,410.5 650.8,407.2 651.7,403.5 652.5,417.1 653.3,398.9 654.1,409.2 654.9,384.4 655.7,384.3 656.6,406.4 657.4,398.5 658.2,415.8 659.0,386.1 659.8,387.2 660.6,412.8 661.5,402.4 662.3,390.9 663.1,387.0 663.9,405.1 664.7,390.8 665.5,401.0 666.3,402.8 667.2,389.0 668.0,400.2 668.8,405.7 669.6,396.3 670.4,389.1 671.2,404.2 672.1,395.0 672.9,396.6 673.7,416.7 674.5,400.9 675.3,387.7 676.1,391.7 677.0,394.1 677.8,392.3 678.6,388.3 679.4,413.6 680.2,410.0 681.0,384.3 681.9,425.7 682.7,406.7 683.5,392.4 684.3,405.4 685.1,413.2 685.9,403.8 686.7,415.0 687.6,398.6 688.4,398.8 689.2,416.8 690.0,415.3 690.8,396.5 691.6,376.7 692.5,388.0 693.3,396.2 694.1,390.5 694.9,414.9 695.7,413.8 696.5,393.9 697.4,391.6 698.2,398.2 699.0,406.4 699.8,410.1 700.6,399.2 701.4,402.5 702.2,402.3 703.1,404.2 703.9,391.6 704.7,419.1 705.5,411.2 706.3,410.3 707.1,408.2 708.0,397.5 708.8,385.6 709.6,401.3 710.4,398.8 711.2,399.4 712.0,395.1 712.9,408.6 713.7,408.5 714.5,392.4 715.3,436.2 716.1,391.0 716.9,390.7 717.7,405.1 718.6,390.2 719.4,390.7 720.2,396.5 721.0,409.7 721.8,390.8 722.6,403.4 723.5,384.7 724.3,393.0 725.1,385.1 725.9,405.0 726.7,385.8 727.5,412.3 728.4,394.0 729.2,396.1 730.0,404.1 730.8,403.7 731.6,408.8 732.4,394.0 733.2,410.9 734.1,399.3 734.9,394.6 735.7,403.5 736.5,394.1 737.3,410.8 738.1,390.8 739.0,401.9 739.8,400.8 740.6,405.3 741.4,381.8 742.2,399.4 743.0,400.3 743.9,416.1 744.7,397.7 745.5,386.3 746.3,387.5 747.1,410.1 747.9,400.5 748.7,394.9 749.6,399.1 750.4,403.5 751.2,387.0 752.0,412.2 752.8,401.9 753.6,407.4 754.5,398.7 755.3,393.4 756.1,412.9 756.9,412.8 757.7,411.5 758.5,394.3 759.4,386.4 760.2,405.8 761.0,398.2 761.8,389.8 762.6,397.6 763.4,405.2 764.2,403.0 765.1,396.0 765.9,401.5 766.7,384.4 767.5,396.7 768.3,408.2 769.1,402.8 770.0,395.8 770.8,386.6 771.6,391.9 772.4,407.8 773.2,416.4 774.0,377.6 774.9,396.3 775.7,403.2 776.5,393.4 777.3,398.6 778.1,398.2 778.9,406.3 779.7,388.3 780.6,397.6 781.4,394.1 782.2,394.5 783.0,414.0 783.8,388.4 784.6,390.5 785.5,403.2 786.3,394.1 787.1,407.6 787.9,422.5 788.7,403.7 789.5,388.2 790.4,411.5 791.2,394.3 792.0,411.8 792.8,389.3 793.6,401.6 794.4,411.8 795.2,391.4 796.1,395.8 796.9,397.7 797.7,388.9 798.5,388.8 799.3,394.6 800.1,407.1 801.0,389.6 801.8,391.9 802.6,390.3 803.4,396.5 804.2,402.4 805.0,386.9 805.9,408.5 806.7,407.2 807.5,396.6 808.3,396.4 809.1,405.2 809.9,413.0 810.7,398.5 811.6,400.6 812.4,403.0 813.2,429.8 814.0,403.4 814.8,400.5 815.6,398.6 816.5,420.2 817.3,413.8 818.1,413.9 818.9,392.8 819.7,406.3 820.5,393.2 821.4,397.0 822.2,405.1 823.0,407.3 823.8,399.4 824.6,415.5 825.4,405.2 826.2,389.1 827.1,396.4 827.9,404.1 828.7,395.3 829.5,402.9 830.3,395.2 831.1,409.3 832.0,396.8 832.8,406.7 833.6,406.3 834.4,418.3 835.2,391.0 836.0,409.5 836.9,388.4 837.7,408.4 838.5,396.9 839.3,404.8 840.1,408.8 840.9,388.9 841.7,403.9 842.6,412.4 843.4,404.8 844.2,399.6 845.0,405.2 845.8,404.5 846.6,399.5 847.5,404.6 848.3,416.6 849.1,404.4 849.9,395.1 850.7,395.2 851.5,388.5 852.4,390.5 853.2,393.5 854.0,395.9 854.8,410.4 855.6,404.4 856.4,412.3 857.2,417.8 858.1,406.9 858.9,395.6 859.7,413.5 860.5,399.6 861.3,405.1 862.1,410.0 863.0,377.6 863.8,402.2 864.6,415.2 865.4,392.0 866.2,415.1 867.0,390.3 867.9,387.4 868.7,390.6 869.5,387.2 870.3,403.5 871.1,394.5 871.9,393.7 872.7,385.7 873.6,409.7 874.4,415.6 875.2,399.5 876.0,397.4 876.8,428.9 877.6,409.1 878.5,407.3 879.3,413.3 880.1,381.8 880.9,414.3 881.7,396.4 882.5,390.3 883.4,405.4 884.2,402.8 885.0,388.7 885.8,397.2" fill="none" stroke="#e9e11c" stroke-width="2" stroke-linejoin="round"/>

  <rect x="473" y="156" width="10" height="133.4" fill="#000"/>
  <line x1="477.9" y1="162.6" x2="477.9" y2="226" stroke="#c9a626" stroke-width="1.3"/>
  <line x1="477.9" y1="226" x2="477.9" y2="289.4" stroke="#e2a818" stroke-width="2"/>
  <!-- markers -->
  <line x1="233.2" y1="288.9" x2="233.2" y2="479.7" stroke="#1dabb8" stroke-width="2.3"/>
<text transform="translate(236.8,50.4) rotate(-90)" text-anchor="end" font-size="15" fill="#22c7d3" stroke="#22c7d3" stroke-width="0.25">Marker4 | 470.000MHz | -99.50dBm</text>
<line x1="477.9" y1="288.9" x2="477.9" y2="479.7" stroke="#1dabb8" stroke-width="2.3"/>
<text transform="translate(481.5,50.4) rotate(-90)" text-anchor="end" font-size="15" fill="#22c7d3" stroke="#22c7d3" stroke-width="0.25">Marker1 | 500.000MHz | -41.00dBm</text>
<line x1="641.1" y1="288.9" x2="641.1" y2="479.7" stroke="#1dabb8" stroke-width="2.3"/>
<text transform="translate(644.7,50.4) rotate(-90)" text-anchor="end" font-size="15" fill="#22c7d3" stroke="#22c7d3" stroke-width="0.25">Marker2 | 520.000MHz | -98.00dBm</text>
<line x1="804.2" y1="297.2" x2="804.2" y2="479.7" stroke="#1dabb8" stroke-width="2.3"/>
<text transform="translate(807.8,50.4) rotate(-90)" text-anchor="end" font-size="15" fill="#22c7d3" stroke="#22c7d3" stroke-width="0.25">Marker3 | 540.000MHz | -101.00dBm</text>

  <rect x="476.1" y="289.6" width="3.7" height="86" fill="url(#spk)"/>

  <!-- side menu frames -->
  <rect x="1097.6" y="0" width="182.4" height="800" fill="#808080"/>
<rect x="1105.8" y="2.7" width="166.8" height="56" fill="#828282" stroke="#0f7bd4" stroke-width="2.8"/>
<rect x="1107.9" y="4.8" width="162.6" height="51.8" fill="none" stroke="#d8eafb" stroke-width="1.4"/>
<rect x="1106.9" y="64.45" width="164.9" height="54.8" fill="#818181" stroke="#dadada" stroke-width="3.4"/>
<rect x="1106.9" y="125.75" width="164.9" height="54.8" fill="#818181" stroke="#dadada" stroke-width="3.4"/>
<rect x="1106.9" y="187.05" width="164.9" height="54.8" fill="#818181" stroke="#dadada" stroke-width="3.4"/>
<rect x="1106.9" y="248.35" width="164.9" height="54.8" fill="#818181" stroke="#dadada" stroke-width="3.4"/>
<rect x="1106.9" y="309.65" width="164.9" height="54.8" fill="#818181" stroke="#dadada" stroke-width="3.4"/>
<rect x="1106.9" y="370.95" width="164.9" height="54.8" fill="#818181" stroke="#dadada" stroke-width="3.4"/>
<rect x="1106.9" y="432.25" width="164.9" height="54.8" fill="#818181" stroke="#dadada" stroke-width="3.4"/>
<rect x="1106.9" y="493.55" width="164.9" height="54.8" fill="#818181" stroke="#dadada" stroke-width="3.4"/>
<rect x="1106.9" y="554.85" width="164.9" height="54.8" fill="#818181" stroke="#dadada" stroke-width="3.4"/>
<rect x="1106.9" y="616.15" width="164.9" height="54.8" fill="#818181" stroke="#dadada" stroke-width="3.4"/>
<rect x="1106.9" y="677.45" width="164.9" height="54.8" fill="#818181" stroke="#dadada" stroke-width="3.4"/>

  <!-- marker list frame -->
  <path d="M942.7 747 V0.6 H1098 M941.7 746.8 H1098" fill="none" stroke="#8e8e8e" stroke-width="2"/>

  <!-- DM OFF icon -->
  <rect x="836.8" y="6.6" width="38" height="35.6" rx="4" fill="#686868" stroke="#a8a8a8" stroke-width="2.5"/>
  <text x="840.2" y="27" font-size="23.7" fill="#ececec" textLength="31.4" lengthAdjust="spacingAndGlyphs">DM</text>
  <rect x="840.7" y="29.7" width="7.4" height="9.2" fill="none" stroke="#d4d4d4" stroke-width="1.4"/>
  <text x="850.8" y="39.5" font-size="14" fill="#e6e6e6" textLength="22.2" lengthAdjust="spacingAndGlyphs">OFF</text>

  <!-- battery + plug -->
  <g fill="none" stroke="#fff">
    <path d="M910 12.75 H931.6 V34.75 H905" stroke-width="3"/>
    <rect x="933" y="19.4" width="2" height="8.1" fill="#fff" stroke="none"/>
    <path d="M910.4 16 H928 V31 H905.6 V27 Z" fill="#fff" stroke="none"/>
    <rect x="898.4" y="5.3" width="1.9" height="6.5" fill="#fff" stroke="none"/>
    <rect x="903.4" y="5.3" width="1.9" height="6.5" fill="#fff" stroke="none"/>
    <path d="M897.2 12.5 H906.6 V20 L902 24.4 L897.2 20 Z" stroke-width="2.4" fill="#000"/>
    <path d="M902 24 V36.25" stroke-width="3.3"/>
  </g>

  <!-- satellite -->
  <g fill="none" stroke="#fff" stroke-width="3" stroke-linejoin="miter">
    <path d="M904.4 77.4 L894.6 89.4 L904.4 100.2 L911.5 100.2 L914.3 95.6 L914.3 88.6 Z"/>
    <path d="M936 115.2 L925.8 127.4 L916.8 116.6 L916.8 108 L920.2 104 L926.4 104 Z"/>
    <rect x="910.6" y="95.6" width="11" height="11" rx="3.2" fill="#fff" stroke="none"/>
  </g>

  <!-- network -->
  <g fill="none" stroke="#d2d2d2" stroke-width="2.1">
    <rect x="910" y="209.6" width="10.8" height="11.8" rx="2.4"/>
    <rect x="893.7" y="246" width="10.8" height="11.4" rx="2.4"/>
    <rect x="910" y="246" width="10.8" height="11.4" rx="2.4"/>
    <rect x="925.8" y="246" width="10.8" height="11.4" rx="2.4"/>
    <path d="M915.4 221.4 V246 M899.1 246 V234.6 Q899.1 232.2 901.5 232.2 H928.8 Q931.2 232.2 931.2 234.6 V246"/>
  </g>

  <!-- slider -->
  <rect x="143" y="772.6" width="540" height="3.7" fill="#4a8de2"/>
  <ellipse cx="690.1" cy="774.4" rx="17.3" ry="19.2" fill="url(#knob)" stroke="#3a8eea" stroke-width="0.8"/>

</svg>

<!-- title texts -->
<div class="t" style="left:31px;top:8.8px;color:#a6bfcc">RFEPro v1.26</div>
<div class="t w b" style="left:428px;top:13.9px">Preset Default</div>

<!-- y axis -->
<div class="t w" style="left:0;width:63.5px;text-align:right;top:39.0px">-12.5</div>
<div class="t w" style="left:0;width:63.5px;text-align:right;top:82.2px">-23.3</div>
<div class="t w" style="left:0;width:63.5px;text-align:right;top:125.3px">-34.0</div>
<div class="t w" style="left:0;width:63.5px;text-align:right;top:168.5px">-44.8</div>
<div class="t w" style="left:0;width:63.5px;text-align:right;top:211.6px">-55.5</div>
<div class="t w" style="left:0;width:63.5px;text-align:right;top:254.8px">-66.3</div>
<div class="t w" style="left:0;width:63.5px;text-align:right;top:298.0px">-77.0</div>
<div class="t w" style="left:0;width:63.5px;text-align:right;top:341.1px">-87.8</div>
<div class="t w" style="left:0;width:63.5px;text-align:right;top:384.3px">-98.5</div>
<div class="t w" style="left:0;width:63.5px;text-align:right;top:427.4px">-109.3</div>
<div class="t w" style="left:0;width:63.5px;text-align:right;top:470.6px">-120.0</div>

<div class="t" style="left:-9px;top:253.5px;width:34px;text-align:center;transform:rotate(-90deg)">dBm</div>

<!-- x axis row 1 -->
<div class="t w c" style="left:18.7px;width:100px;top:485.2px">450.000</div>
<div class="t c" style="left:203.3px;width:140px;top:485.2px">Offset 0MHz</div>
<div class="t w c" style="left:408px;width:140px;top:485.2px">500.000 MHz</div>
<div class="t c" style="left:613px;width:140px;top:485.2px">Span 100MHz</div>
<div class="t w c" style="left:837px;width:100px;top:485.2px">550.000</div>
<!-- x axis row 2 -->
<div class="t" style="left:33.6px;top:502.9px">ARBW 100KHz</div>
<div class="t c" style="left:173.3px;width:200px;top:502.9px">2026-02-27 05:39:07.969</div>
<div class="t c" style="left:408px;width:140px;top:502.9px">40/300 min</div>
<div class="t c" style="left:613px;width:140px;top:502.9px">Step 0.1MHz</div>
<div class="t" style="left:740px;width:200.5px;text-align:right;top:502.9px;white-space:pre">Swp 360ms  1001pts</div>

<!-- status column -->
<div class="t c" style="left:886px;width:58px;top:41.2px">B100%</div>
<div class="t c" style="left:886px;width:58px;top:141.2px">DIR</div>
<div class="t c" style="left:886px;width:58px;top:171.6px">LIVE</div>

<!-- marker list -->
<div class="t w b" style="left:949px;top:7.0px">M1: 0500.000 MHz</div>
<div class="t" style="left:954px;top:24.5px;color:#e2665e">RT: -41.00dBm</div>
<div class="t w" style="left:954px;top:41.9px">Avg: -41.30dBm</div>
<div class="t w b" style="left:949px;top:59.4px">M2: 0520.000 MHz</div>
<div class="t" style="left:954px;top:76.9px;color:#e2665e">RT: -98.00dBm</div>
<div class="t w" style="left:954px;top:94.3px">Avg: -98.70dBm</div>
<div class="t w b" style="left:949px;top:111.8px">M3: 0540.000 MHz</div>
<div class="t" style="left:954px;top:129.3px;color:#e2665e">RT: -101.00dBm</div>
<div class="t w" style="left:954px;top:146.8px">Avg: -100.60dBm</div>
<div class="t w b" style="left:949px;top:164.2px">M4: 0470.000 MHz</div>
<div class="t" style="left:954px;top:181.7px;color:#e2665e">RT: -99.50dBm</div>
<div class="t w" style="left:954px;top:199.2px">Avg: -101.05dBm</div>


<!-- side menu -->
<div id="side">
<div class="mt" style="top:5.5px">Mode</div>
<div class="mt" style="top:66.8px">Config</div>
<div class="mt" style="top:128.0px">Amplitude</div>
<div class="mt" style="top:189.2px">Frequency</div>
<div class="mt" style="top:250.5px">Generator</div>
<div class="mt" style="top:311.8px">Marker</div>
<div class="mt" style="top:373.0px">File</div>
<div class="mt" style="top:434.2px">Presets</div>
<div class="mt" style="top:495.5px">Report</div>
<div class="mt" style="top:556.8px">HELP</div>
<div class="mt" style="top:618.0px">System</div>
<div class="mt" style="top:679.2px">Exit</div>

</div>

<!-- bottom buttons -->
<div class="bb" style="left:1.5px;width:51.2px"></div>
<div class="bb" style="left:68.8px;width:51.4px"></div>
<div class="bb" style="left:716px;width:51.8px"></div>
<div class="bb" style="left:783.8px;width:51.4px"></div>
<div class="bb" style="left:851.2px;width:84.8px"></div>
<div class="bb" style="left:952.8px;width:50.9px"></div>
<div class="bb" style="left:1019.9px;width:64.5px"></div>
<svg width="1280" height="800" viewBox="0 0 1280 800" style="pointer-events:none">
  <path d="M976.1 764 V787.6 M984.2 764 V787.6" stroke="#f6f6f6" stroke-width="2" fill="none"/>
  <text x="876.2" y="783.7" font-size="23.8" fill="#fff" textLength="39.8" lengthAdjust="spacingAndGlyphs">Play</text>
  <text x="1030.7" y="783.9" font-size="23.8" fill="#fff" textLength="45.7" lengthAdjust="spacingAndGlyphs">Hold</text>
  <!-- << < > >> glyphs -->
  <g fill="none" stroke="#fff" stroke-width="1.7">
    <path d="M26.3 769.6 L14.4 775.6 L26.3 781.8"/>
    <path d="M43.8 769.6 L32 775.6 L43.8 781.8"/>
    <path d="M102.6 769.6 L90.6 775.6 L102.6 781.8"/>
  </g>
  <g fill="none" stroke="#3c3c3c" stroke-width="1.7">
    <path d="M737.6 769.6 L749.4 775.6 L737.6 781.8"/>
    <path d="M796.4 769.6 L808.2 775.6 L796.4 781.8"/>
    <path d="M814 769.6 L825.8 775.6 L814 781.8"/>
  </g>
</svg>

</body>
</html>
